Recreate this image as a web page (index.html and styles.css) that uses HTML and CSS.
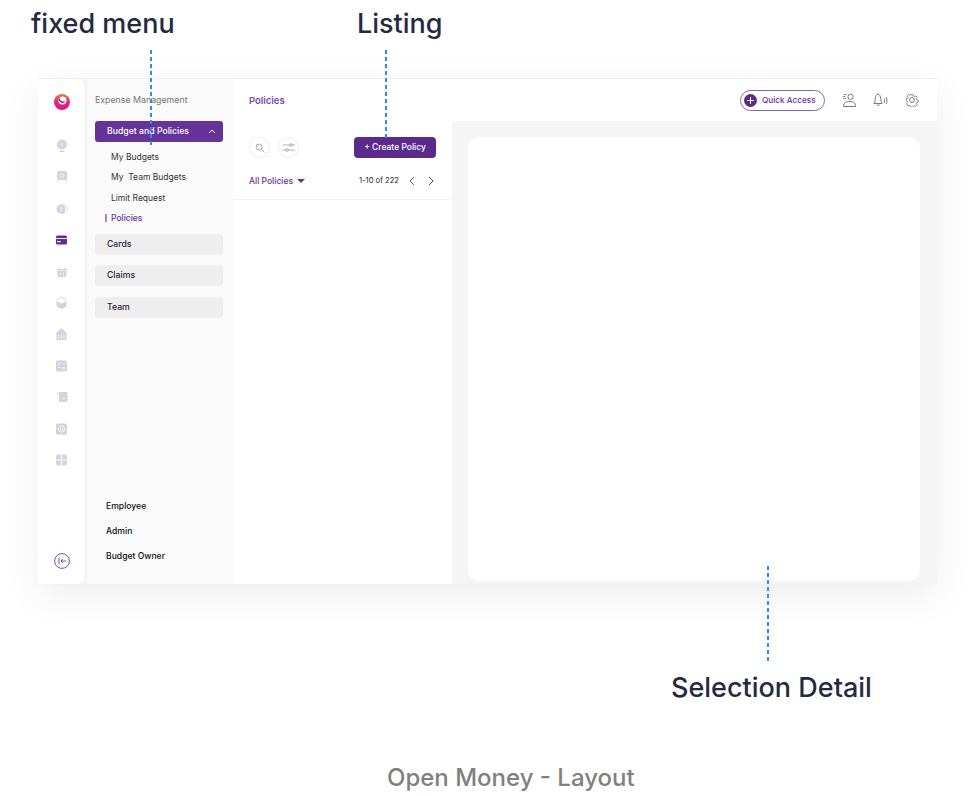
FILE: index.html
```html
<!DOCTYPE html>
<html>
<head>
  <meta charset="utf-8">
  <title>Open Money - Layout</title>
  <link rel="stylesheet" href="styles.css">
</head>
<body>
  <div class="page">
    <div class="labels-top">
      <div class="label label-menu">fixed menu</div>
      <div class="label">Listing</div>
    </div>

    <div class="app">
      <div class="rail">
        <svg class="logo" width="18" height="18" viewBox="0 0 18 18">
          <defs>
            <linearGradient id="lg" x1="0" y1="0" x2="0" y2="1">
              <stop offset="0" stop-color="#f5792a"/>
              <stop offset="0.5" stop-color="#e8228a"/>
              <stop offset="1" stop-color="#e0187f"/>
            </linearGradient>
          </defs>
          <circle cx="9" cy="9" r="8" fill="url(#lg)"/>
          <circle cx="9.500" cy="7.500" r="4" fill="#fff"/>
          <path d="M6.500 4.500a4 4 0 0 0 6 3.500a3.400 3.400 0 0 1-6-3.500z" fill="#5b2a8c"/>
        </svg>
        <div class="rail-icons">
          <svg width="12" height="14" viewBox="0 0 12 14"><circle cx="6" cy="5.500" r="5" fill="#d3d3e0"/><rect x="3.500" y="11.500" width="5" height="1.500" fill="#d3d3e0"/><rect x="5.300" y="4" width="1.400" height="3" fill="#eee"/></svg>
          <svg width="12" height="13" viewBox="0 0 12 13"><rect x="1" y="0.500" width="10" height="9" rx="1.500" fill="#d3d3e0"/><circle cx="6" cy="5" r="2" fill="none" stroke="#f4f4f8"/><path d="M2 10l-1 2M10 10l1 2" stroke="#d3d3e0"/></svg>
          <svg width="12" height="12" viewBox="0 0 12 12"><circle cx="7" cy="6" r="4.600" fill="none" stroke="#e0e0e8"/><circle cx="5" cy="6" r="4.500" fill="#d3d3e0"/><rect x="4.300" y="3.500" width="1.400" height="5" fill="#f0f0f5"/></svg>
          <svg width="11" height="9" viewBox="0 0 11 9"><rect width="11" height="9" rx="1.500" fill="#5f2e94"/><rect x="0" y="2.500" width="11" height="1" fill="#e9e0f3"/><rect x="1.200" y="5.500" width="3.500" height="1.200" fill="#fff"/></svg>
          <svg width="12" height="12" viewBox="0 0 12 12"><path d="M1 4.500h10l-1 6.500h-8z" fill="#d3d3e0"/><path d="M0.500 3.500h11M3 3.500l1-2.500M9 3.500l-1-2.500" stroke="#d3d3e0" fill="none"/><path d="M4.500 6.500v3M7.500 6.500v3" stroke="#f4f4f8"/></svg>
          <svg width="11" height="13" viewBox="0 0 11 13"><path d="M0.500 4.500l5 2.500 5-2.500v5.500l-5 2.500-5-2.500z" fill="#d3d3e0"/><path d="M0.800 3.500l4.700-3 4.700 3" fill="none" stroke="#d3d3e0"/></svg>
          <svg width="11" height="13" viewBox="0 0 11 13"><path d="M0.500 5l5-4.500 5 4.500v7a0.500 0.500 0 0 1-0.500 0.500h-9a0.500 0.500 0 0 1-0.500-0.500z" fill="#d3d3e0"/><path d="M3 7v4M5.500 7v4M8 7v4" stroke="#f4f4f8"/></svg>
          <svg width="11" height="11" viewBox="0 0 11 11"><rect width="11" height="11" rx="1.500" fill="#d3d3e0"/><path d="M2 3.500h2.500M2 7h2.500M6.500 3.500h2.500M6.500 7h2.500M6.500 8.500h2.500" stroke="#f4f4f8"/></svg>
          <svg width="12" height="11" viewBox="0 0 12 11"><rect x="3" y="0.500" width="8.500" height="10" rx="1" fill="#d3d3e0"/><path d="M0.500 1.500h3" stroke="#d3d3e0" fill="none"/><rect x="6.500" y="6.500" width="3" height="1" fill="#f4f4f8"/></svg>
          <svg width="11" height="11" viewBox="0 0 11 11"><rect width="11" height="11" rx="1.500" fill="#d3d3e0"/><circle cx="5.500" cy="5.500" r="3.200" fill="none" stroke="#f4f4f8"/><circle cx="5.500" cy="5.500" r="1.300" fill="none" stroke="#f4f4f8" stroke-width="0.700"/></svg>
          <svg width="11" height="11" viewBox="0 0 11 11"><rect width="11" height="11" rx="2.500" fill="#d3d3e0"/><path d="M5.500 0v11M0 5.500h11" stroke="#fbfbfd" stroke-width="1.200"/></svg>
        </div>
        <svg class="collapse" width="16" height="16" viewBox="0 0 16 16" fill="none" stroke="#6a3a9e">
          <circle cx="8" cy="8" r="7.400" stroke-width="0.900"/>
          <path d="M5 5v6M12 8H7M9 6L7 8l2 2" stroke-width="0.900"/>
        </svg>
      </div>

      <div class="side">
        <div class="side-title">Expense Management</div>
        <div class="group group-open">
          <span>Budget and Policies</span>
          <svg width="8" height="5" viewBox="0 0 8 5" fill="none" stroke="#fff"><path d="M1 4l3-3 3 3"/></svg>
        </div>
        <div class="sub">
          <div class="sub-item">My Budgets</div>
          <div class="sub-item">My&nbsp; Team Budgets</div>
          <div class="sub-item">Limit Request</div>
          <div class="sub-item sub-active">Policies</div>
        </div>
        <div class="group">Cards</div>
        <div class="group">Claims</div>
        <div class="group">Team</div>
        <div class="roles">
          <div>Employee</div>
          <div>Admin</div>
          <div>Budget Owner</div>
        </div>
      </div>

      <div class="main">
        <div class="topbar">
          <div class="crumb">Policies</div>
          <div class="top-actions">
            <div class="quick">
              <span class="quick-plus">
                <svg width="7" height="7" viewBox="0 0 7 7" stroke="#fff"><path d="M3.500 0v7M0 3.500h7"/></svg>
              </span>
              Quick Access
            </div>
            <svg width="14" height="14" viewBox="0 0 14 14" fill="none" stroke="#555"><circle cx="8.500" cy="3.800" r="2.600" stroke-width="0.800"/><path d="M1.500 13.500c0-3.500 2.500-5 6.500-5s5.500 1.500 5.500 5z" stroke-width="0.800"/><path d="M1.500 1.500h3M0.800 3.500h2.500M1.500 5.500h2.500" stroke-width="0.700"/></svg>
            <svg width="15" height="14" viewBox="0 0 15 14" fill="none" stroke="#555"><path d="M1 10.500c1-1 1-2.500 1.300-5C2.600 3 3.800 1 5 1s2.400 2 2.700 4.500c.3 2.500.5 4 1.300 5z" stroke-width="0.800"/><path d="M4 11.500a1.300 1.300 0 0 0 2.500 0M11 5.500c.8 1.500.8 3 0 4.500M13 4c1.300 2 1.300 5 0 7" stroke-width="0.800"/></svg>
            <svg width="14" height="14" viewBox="0 0 14 14" fill="none" stroke="#555"><circle cx="7" cy="7" r="2.400" stroke-width="0.800"/><path d="M5.800.7h2.400l.4 1.700 1.500.6 1.500-.9 1.700 1.700-.9 1.500.6 1.500 1.400.3v2.400l-1.600.4-.6 1.500.9 1.500-1.700 1.700-1.500-.9-1.500.6-.4 1.300H5.800l-.4-1.500-1.500-.6-1.500.9L.7 11.200l.9-1.500-.6-1.500-.9-.4V5.400l1.500-.3.6-1.500-.9-1.500 1.700-1.700 1.500.9 1.500-.6z" stroke-width="0.800" transform="translate(1.100 1.100) scale(.84)"/></svg>
          </div>
        </div>
        <div class="work">
          <div class="list">
            <div class="list-tools">
              <div class="tool-buttons">
                <span class="round">
                  <svg width="10" height="10" viewBox="0 0 10 10" fill="none" stroke="#aaa"><circle cx="4" cy="4" r="3"/><path d="M6.200 6.200L9.500 9.500"/></svg>
                </span>
                <span class="round">
                  <svg width="12" height="9" viewBox="0 0 12 9" fill="none" stroke="#999" stroke-width="0.800"><path d="M0 2h12M0 7h12"/><circle cx="8" cy="2" r="1.300" fill="#fff"/><circle cx="4" cy="7" r="1.300" fill="#fff"/></svg>
                </span>
              </div>
              <div class="create">+ Create Policy</div>
            </div>
            <div class="list-filter">
              <div class="filter">All Policies <span class="caret"></span></div>
              <div class="pager">
                <span class="pager-text">1-10 of 222</span>
                <svg width="6" height="10" viewBox="0 0 6 10" fill="none" stroke="#666"><path d="M5 1L1 5l4 4"/></svg>
                <svg width="6" height="10" viewBox="0 0 6 10" fill="none" stroke="#5f2e94"><path d="M1 1l4 4-4 4"/></svg>
              </div>
            </div>
          </div>
          <div class="detail-wrap">
            <div class="detail"></div>
          </div>
        </div>
      </div>
    </div>

    <div class="label label-detail">Selection Detail</div>
    <div class="caption">Open Money - Layout</div>

    <div class="dash dash-menu"></div>
    <div class="dash dash-list"></div>
    <div class="dash dash-detail"></div>
  </div>
</body>
</html>
```

FILE: styles.css
```css
body {
  margin: 0;
  background: #fff;
  font-family: "Inter", "Liberation Sans", sans-serif;
}
.page {
  position: relative;
  width: 975px;
  height: 796px;
  overflow: hidden;
}
.labels-top {
  display: flex;
  padding: 8px 0 0 31px;
  height: 78px;
  box-sizing: border-box;
}
.label {
  font-size: 27px;
  font-weight: 500;
  line-height: 32px;
  color: #26293f;
}
.label-menu {
  width: 326px;
}
.app {
  display: flex;
  margin-left: 38px;
  width: 899px;
  height: 506px;
  background: #f5f5f5;
  box-shadow: 0 12px 36px rgba(0, 0, 0, 0.07);
  border-top: 1px solid #f0f0f0;
  box-sizing: border-box;
}
.rail {
  width: 47px;
  background: #fff;
  border-radius: 0 8px 8px 0;
  display: flex;
  flex-direction: column;
  align-items: center;
  padding: 14px 0 15px;
  box-sizing: border-box;
  margin-right: 2px;
  box-shadow: 1px 0 3px rgba(0, 0, 0, 0.03);
}
.logo {
  margin-bottom: 28px;
}
.rail-icons {
  display: flex;
  flex-direction: column;
  align-items: center;
  flex: 1;
}
.rail-icons svg {
  height: 14px;
  margin-bottom: 17.400px;
}
.side {
  width: 146px;
  background: #fafafa;
  padding: 0 10px 0 8px;
  box-sizing: border-box;
  display: flex;
  flex-direction: column;
}
.side-title {
  font-size: 8.800px;
  color: #777;
  margin-top: 15px;
  line-height: 12px;
  margin-bottom: 15px;
}
.group {
  height: 21px;
  border-radius: 3px;
  background: #eeeeee;
  color: #2c2440;
  font-size: 8.700px;
  font-weight: 500;
  line-height: 21px;
  padding: 0 7px 0 12px;
  margin-bottom: 10.500px;
  display: flex;
  justify-content: space-between;
  align-items: center;
}
.group-open {
  background: #663399;
  color: #fff;
  margin-bottom: 5px;
}
.sub {
  margin-bottom: 5px;
}
.sub-item {
  font-size: 8.500px;
  line-height: 20.400px;
  color: #333;
  padding-left: 16px;
  position: relative;
}
.sub-active {
  color: #663399;
  font-weight: 500;
}
.sub-active::before {
  content: "";
  position: absolute;
  left: 10px;
  top: 6px;
  width: 2px;
  height: 8px;
  background: #a98ad0;
}
.roles {
  margin-top: auto;
  padding: 0 0 15px 11px;
  font-size: 8.600px;
  font-weight: 500;
  color: #111;
  line-height: 25px;
}
.main {
  flex: 1;
  display: flex;
  flex-direction: column;
}
.topbar {
  height: 42px;
  background: #fff;
  display: flex;
  justify-content: space-between;
  align-items: center;
  padding: 0 18px 0 16px;
}
.crumb {
  font-size: 9.500px;
  font-weight: 600;
  color: #7a4aa8;
}
.top-actions {
  display: flex;
  align-items: center;
  gap: 17px;
}
.quick {
  width: 85px;
  height: 21px;
  box-sizing: border-box;
  border: 1px solid #8a63b5;
  border-radius: 11px;
  display: flex;
  align-items: center;
  gap: 5px;
  padding-left: 3px;
  font-size: 8.200px;
  font-weight: 500;
  color: #663399;
}
.quick-plus {
  width: 13px;
  height: 13px;
  border-radius: 50%;
  background: #5b2a8c;
  display: flex;
  align-items: center;
  justify-content: center;
}
.work {
  flex: 1;
  display: flex;
}
.list {
  width: 219px;
  background: #fff;
}
.list-tools {
  display: flex;
  justify-content: space-between;
  align-items: center;
  padding: 16px 16px 0;
}
.tool-buttons {
  display: flex;
  gap: 8px;
}
.round {
  width: 21px;
  height: 21px;
  box-sizing: border-box;
  border: 1px solid #eee;
  border-radius: 50%;
  display: flex;
  align-items: center;
  justify-content: center;
}
.create {
  width: 82px;
  height: 21px;
  background: #5b2a8c;
  border-radius: 4px;
  color: #fff;
  font-size: 8.500px;
  font-weight: 500;
  line-height: 21px;
  text-align: center;
}
.list-filter {
  display: flex;
  justify-content: space-between;
  align-items: center;
  padding: 13px 18px 9px 16px;
  border-bottom: 1px solid #f2f2f2;
  height: 19px;
}
.filter {
  font-size: 8.500px;
  font-weight: 500;
  color: #663399;
  display: flex;
  align-items: center;
  gap: 2px;
}
.caret {
  width: 0;
  height: 0;
  border-left: 4px solid transparent;
  border-right: 4px solid transparent;
  border-top: 4px solid #663399;
  margin-left: 2px;
}
.pager {
  display: flex;
  align-items: center;
  gap: 13px;
  color: #222;
}
.pager-text {
  font-size: 7.600px;
  margin-right: -3px;
}
.detail-wrap {
  flex: 1;
  padding: 16px 17px 3px 16px;
  display: flex;
}
.detail {
  flex: 1;
  background: #fff;
  border-radius: 12px;
}
.label-detail {
  margin: 88px 0 0 671px;
}
.caption {
  margin: 59px 0 0 387px;
  font-size: 24px;
  font-weight: 500;
  line-height: 30px;
  color: #808080;
}
.dash {
  position: absolute;
  width: 2px;
  background: repeating-linear-gradient(to bottom, #2b8fe6 0 4px, transparent 4px 7px);
}
.dash-menu {
  left: 150px;
  top: 50px;
  height: 97px;
}
.dash-list {
  left: 385px;
  top: 50px;
  height: 91px;
}
.dash-detail {
  left: 767px;
  top: 566px;
  height: 98px;
}
```
